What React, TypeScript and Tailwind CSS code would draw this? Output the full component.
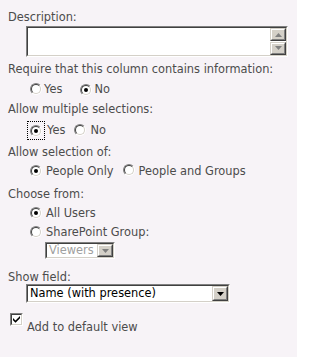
import React from "react";

const FONT = { fontFamily: '"DejaVu Sans", Verdana, sans-serif' };

function Radio({ checked }: { checked?: boolean }) {
  return (
    <span className="inline-flex h-[12px] w-[12px] shrink-0 rounded-full border border-t-[#808080] border-l-[#808080] border-r-white border-b-white">
      <span className="flex h-full w-full items-center justify-center rounded-full border border-t-[#404040] border-l-[#404040] border-r-[#d4d0c8] border-b-[#d4d0c8] bg-white">
        {checked && <span className="h-[4px] w-[4px] rounded-full bg-black" />}
      </span>
    </span>
  );
}

function Sunken({ className, children }: { className?: string; children?: React.ReactNode }) {
  return (
    <div className={`border border-t-[#808080] border-l-[#808080] border-r-white border-b-white ${className ?? ""}`}>
      <div className="flex h-full w-full border border-t-[#404040] border-l-[#404040] border-r-[#d4d0c8] border-b-[#d4d0c8] bg-white">
        {children}
      </div>
    </div>
  );
}

function Button3d({ className, children }: { className?: string; children?: React.ReactNode }) {
  return (
    <div className={`border border-t-[#d4d0c8] border-l-[#d4d0c8] border-r-[#404040] border-b-[#404040] ${className ?? ""}`}>
      <div className="flex h-full w-full items-center justify-center border border-t-white border-l-white border-r-[#808080] border-b-[#808080] bg-[#d4d0c8]">
        {children}
      </div>
    </div>
  );
}

function Arrow({ up, color = "#000" }: { up?: boolean; color?: string }) {
  return (
    <svg width="7" height="4" viewBox="0 0 7 4">
      <path d={up ? "M3.5 0 L7 4 L0 4 Z" : "M0 0 L7 0 L3.5 4 Z"} fill={color} />
    </svg>
  );
}

function Label({ children, className }: { children: React.ReactNode; className?: string }) {
  return <div className={`h-[13px] pl-[8px] ${className ?? ""}`}>{children}</div>;
}

export default function App() {
  return (
    <div
      className="h-[357px] w-[297px] overflow-hidden bg-[#f7f3f7] pt-[11px] text-[11.4px] leading-[13px] text-[#4c4c4c]"
      style={FONT}
    >
      <Label>Description:</Label>

      <Sunken className="ml-[26px] mt-[2px] h-[31px] w-[262px]">
        <div className="flex-1" />
        <div className="flex w-[16px] flex-col">
          <Button3d className="h-[14px] w-[16px]">
            <Arrow up color="#808080" />
          </Button3d>
          <div className="h-[1px]" />
          <Button3d className="h-[14px] w-[16px]">
            <Arrow color="#808080" />
          </Button3d>
        </div>
      </Sunken>

      <Label className="mt-[6px]">Require that this column contains information:</Label>
      <div className="mt-[5px] flex h-[16px] items-center pl-[30px]">
        <Radio />
        <span className="ml-[2px]">Yes</span>
        <span className="ml-[18px]">
          <Radio checked />
        </span>
        <span className="ml-[2px]">No</span>
      </div>

      <Label className="mt-[6px]">Allow multiple selections:</Label>
      <div className="mt-[5px] flex h-[19px] items-center pl-[27px]">
        <span className="flex h-[19px] w-[18px] items-center justify-center border border-dotted border-black">
          <Radio checked />
        </span>
        <span className="ml-[2px]">Yes</span>
        <span className="ml-[9px]">
          <Radio />
        </span>
        <span className="ml-[4px]">No</span>
      </div>

      <Label className="mt-[6px]">Allow selection of:</Label>
      <div className="mt-[4px] flex h-[16px] items-center pl-[30px]">
        <Radio checked />
        <span className="ml-[4px]">People Only</span>
        <span className="ml-[9px]">
          <Radio />
        </span>
        <span className="ml-[4px]">People and Groups</span>
      </div>

      <Label className="mt-[9px]">Choose from:</Label>
      <div className="mt-[4px] flex h-[16px] items-center pl-[30px]">
        <Radio checked />
        <span className="ml-[4px]">All Users</span>
      </div>
      <div className="mt-[3px] flex h-[16px] items-center pl-[30px]">
        <Radio />
        <span className="ml-[4px]">SharePoint Group:</span>
      </div>
      <Sunken className="ml-[45px] mt-[2px] h-[17px] w-[70px]">
        <span className="flex-1 pl-[2px] leading-[12px] text-[#a0a0a0]">Viewers</span>
        <Button3d className="h-[13px] w-[16px]">
          <Arrow color="#808080" />
        </Button3d>
      </Sunken>

      <Label className="mt-[12px]">Show field:</Label>
      <Sunken className="ml-[26px] mt-[0px] h-[19px] w-[204px]">
        <span className="flex-1 pl-[2px] leading-[15px] text-black">Name (with presence)</span>
        <Button3d className="h-[15px] w-[16px]">
          <Arrow />
        </Button3d>
      </Sunken>

      <div className="mt-[10px] flex items-start pl-[10px]">
        <Sunken className="h-[13px] w-[13px]">
          <svg width="9" height="9" viewBox="0 0 9 9" className="m-auto">
            <path d="M1 3 L3.5 5.5 L8 1 L8 3.2 L3.5 7.7 L1 5.2 Z" fill="#000" />
          </svg>
        </Sunken>
        <span className="ml-[4px] mt-[8px]">Add to default view</span>
      </div>
    </div>
  );
}
